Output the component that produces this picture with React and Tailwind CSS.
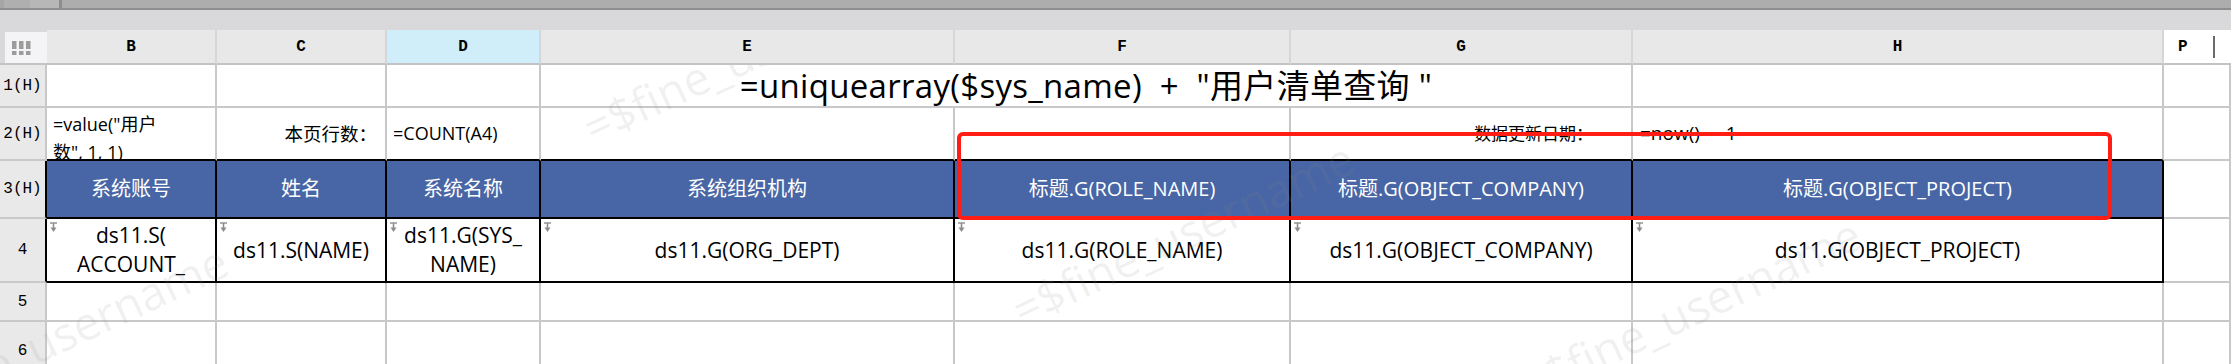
import React from 'react';

// grid line styles
const G = 'border-r-2 border-b-2 border-[#c8c8c8]';
const K = 'border-r-2 border-b-2 border-black';
const GK = 'border-r-2 border-b-2 border-r-[#c8c8c8] border-b-black';
const RH = 'border-r-2 border-b-2 border-[#c8c8c8] bg-[#e9e9e9]';
const RHK = 'border-r-2 border-b-2 border-r-black border-b-[#c8c8c8] bg-[#e9e9e9]';
const HD = 'border-r-2 border-b-2 border-r-[#d6d6da] border-b-[#c3c3c3]';

const sans = "font-['Open_Sans','Noto_Sans_CJK_SC',sans-serif]";
const mono = "font-['Liberation_Mono','Courier_New',monospace]";

function DownMark() {
  return (
    <svg width="9" height="11" viewBox="0 0 9 11" className="absolute left-[2px] top-[3px]">
      <path d="M1 1h7" stroke="#8d8d8d" strokeWidth="1.4" />
      <path d="M4.5 1v5" stroke="#8d8d8d" strokeWidth="1.6" />
      <path d="M1.5 5.5h6L4.5 10z" fill="#8d8d8d" />
    </svg>
  );
}

function GripIcon() {
  return (
    <svg width="19" height="14" viewBox="0 0 19 14">
      {[0, 7, 14].map(x => (
        <g key={x} fill="#9c9c9c">
          <rect x={x} y="0" width="4.5" height="8" />
          <rect x={x} y="10" width="4.5" height="4" />
        </g>
      ))}
    </svg>
  );
}

const headers = ['系统账号', '姓名', '系统名称', '系统组织机构', '标题.G(ROLE_NAME)', '标题.G(OBJECT_COMPANY)', '标题.G(OBJECT_PROJECT)'];
const details = [
  ['ds11.S(', 'ACCOUNT_'],
  ['ds11.S(NAME)'],
  ['ds11.G(SYS_', 'NAME)'],
  ['ds11.G(ORG_DEPT)'],
  ['ds11.G(ROLE_NAME)'],
  ['ds11.G(OBJECT_COMPANY)'],
  ['ds11.G(OBJECT_PROJECT)'],
];

// watermark tiles, placed over the sheet body
const marks = [
  'left-[595px] top-[39px]',
  'left-[1024px] top-[221px]',
  'left-[-102px] top-[324px]',
  'left-[1531px] top-[297px]',
];

export default function App() {
  return (
    <div className={`relative w-[2231px] h-[364px] overflow-hidden bg-white text-black ${sans}`}>
      {/* window top strip */}
      <div className="flex h-[10px] border-b-2 border-[#8e8e8e] bg-[#adadad]">
        <div className="w-[4px] bg-[#a6a6a6]" />
        <div className="w-[26px] bg-[#afafaf]" />
        <div className="w-[32px] bg-[#b7b7b7] border-r-[3px] border-[#8e8e8e]" />
      </div>
      <div className="h-[20px] bg-[#d9d9db]" />

      <div className="grid grid-cols-[47px_170px_170px_154px_414px_336px_342px_531px_1fr] grid-rows-[35px_43px_53px_58px_64px_39px_60px]">
        {/* column letters */}
        <div className="bg-[#d9d9db] pl-[5px] pt-[2px] border-b-2 border-[#c3c3c3]">
          <div className="h-full bg-[#f4f4f6] flex items-center pl-[7px]">
            <GripIcon />
          </div>
        </div>
        {['B', 'C', 'D', 'E', 'F', 'G', 'H'].map(l => (
          <div key={l} className={`${HD} ${l === 'D' ? 'bg-[#cfeef9]' : 'bg-[#e8e8e8]'} flex items-center justify-center ${mono} font-bold text-[16px]`}>
            {l}
          </div>
        ))}
        <div className="border-b-2 border-[#c3c3c3] bg-white flex items-center justify-between">
          <span className={`${mono} font-bold text-[16px] pl-[14px]`}>P</span>
          <div className="w-[2px] h-[22px] bg-[#6a6a6a] mr-[16px]" />
        </div>

        {/* row 1 */}
        <div className={`${RH} flex items-center justify-center ${mono} text-[16px]`}>1(H)</div>
        <div className={G} />
        <div className={G} />
        <div className={G} />
        <div className={`${G} col-span-3 flex items-center justify-center text-[33px] tracking-[0.3px] whitespace-pre`}>
          {'=uniquearray($sys_name)  +  "用户清单查询 "'}
        </div>
        <div className={G} />
        <div className={G} />

        {/* row 2 */}
        <div className={`${RH} flex items-center justify-center ${mono} text-[16px]`}>2(H)</div>
        <div className={`${GK} overflow-hidden pl-[6px] pt-[2px] text-[18px] leading-[28px]`}>
          =value("用户<br />数", 1, 1)
        </div>
        <div className={`${GK} flex items-center justify-end pr-[8px] text-[18.5px]`}>本页行数：</div>
        <div className={`${GK} flex items-center pl-[6px] text-[18px]`}>=COUNT(A4)</div>
        <div className={GK} />
        <div className={GK} />
        <div className={`${GK} flex items-center justify-end pr-[38px] text-[17px]`}>数据更新日期：</div>
        <div className={`${GK} flex items-center pl-[7px] text-[19px] whitespace-pre`}>=now()  -  1</div>
        <div className={G} />

        {/* row 3: table header */}
        <div className={`${RHK} flex items-center justify-center ${mono} text-[16px]`}>3(H)</div>
        {headers.map(h => (
          <div key={h} className={`${K} bg-[#4866a5] text-white flex items-center justify-center text-[20px]`}>
            {h}
          </div>
        ))}
        <div className={G} />

        {/* row 4: detail */}
        <div className={`${RHK} flex items-center justify-center ${mono} text-[16px]`}>4</div>
        {details.map((lines, i) => (
          <div key={i} className={`${K} relative overflow-hidden flex flex-col items-center justify-center text-[21px] leading-[29px]`}>
            <DownMark />
            {lines.map(t => <span key={t}>{t}</span>)}
          </div>
        ))}
        <div className={G} />

        {/* rows 5, 6 */}
        {['5', '6'].map(r => (
          <React.Fragment key={r}>
            <div className={`${RH} flex items-center justify-center ${mono} text-[16px]`}>{r}</div>
            <div className={G} />
            <div className={G} />
            <div className={G} />
            <div className={G} />
            <div className={G} />
            <div className={G} />
            <div className={G} />
            <div className={G} />
          </React.Fragment>
        ))}
      </div>

      {/* watermark */}
      <div className="pointer-events-none absolute left-0 right-0 top-[65px] bottom-0 overflow-hidden">
        {marks.map((pos, i) => (
          <span key={i} className={`absolute ${pos} origin-bottom-left -rotate-[25deg] whitespace-nowrap text-[46px] leading-none text-[rgba(140,140,140,0.12)]`}>
            =$fine_username
          </span>
        ))}
      </div>

      {/* red highlight box */}
      <div className="pointer-events-none absolute left-[957px] top-[132px] w-[1155px] h-[88px] border-4 border-[#ff1d14] rounded-[6px]" />
    </div>
  );
}
